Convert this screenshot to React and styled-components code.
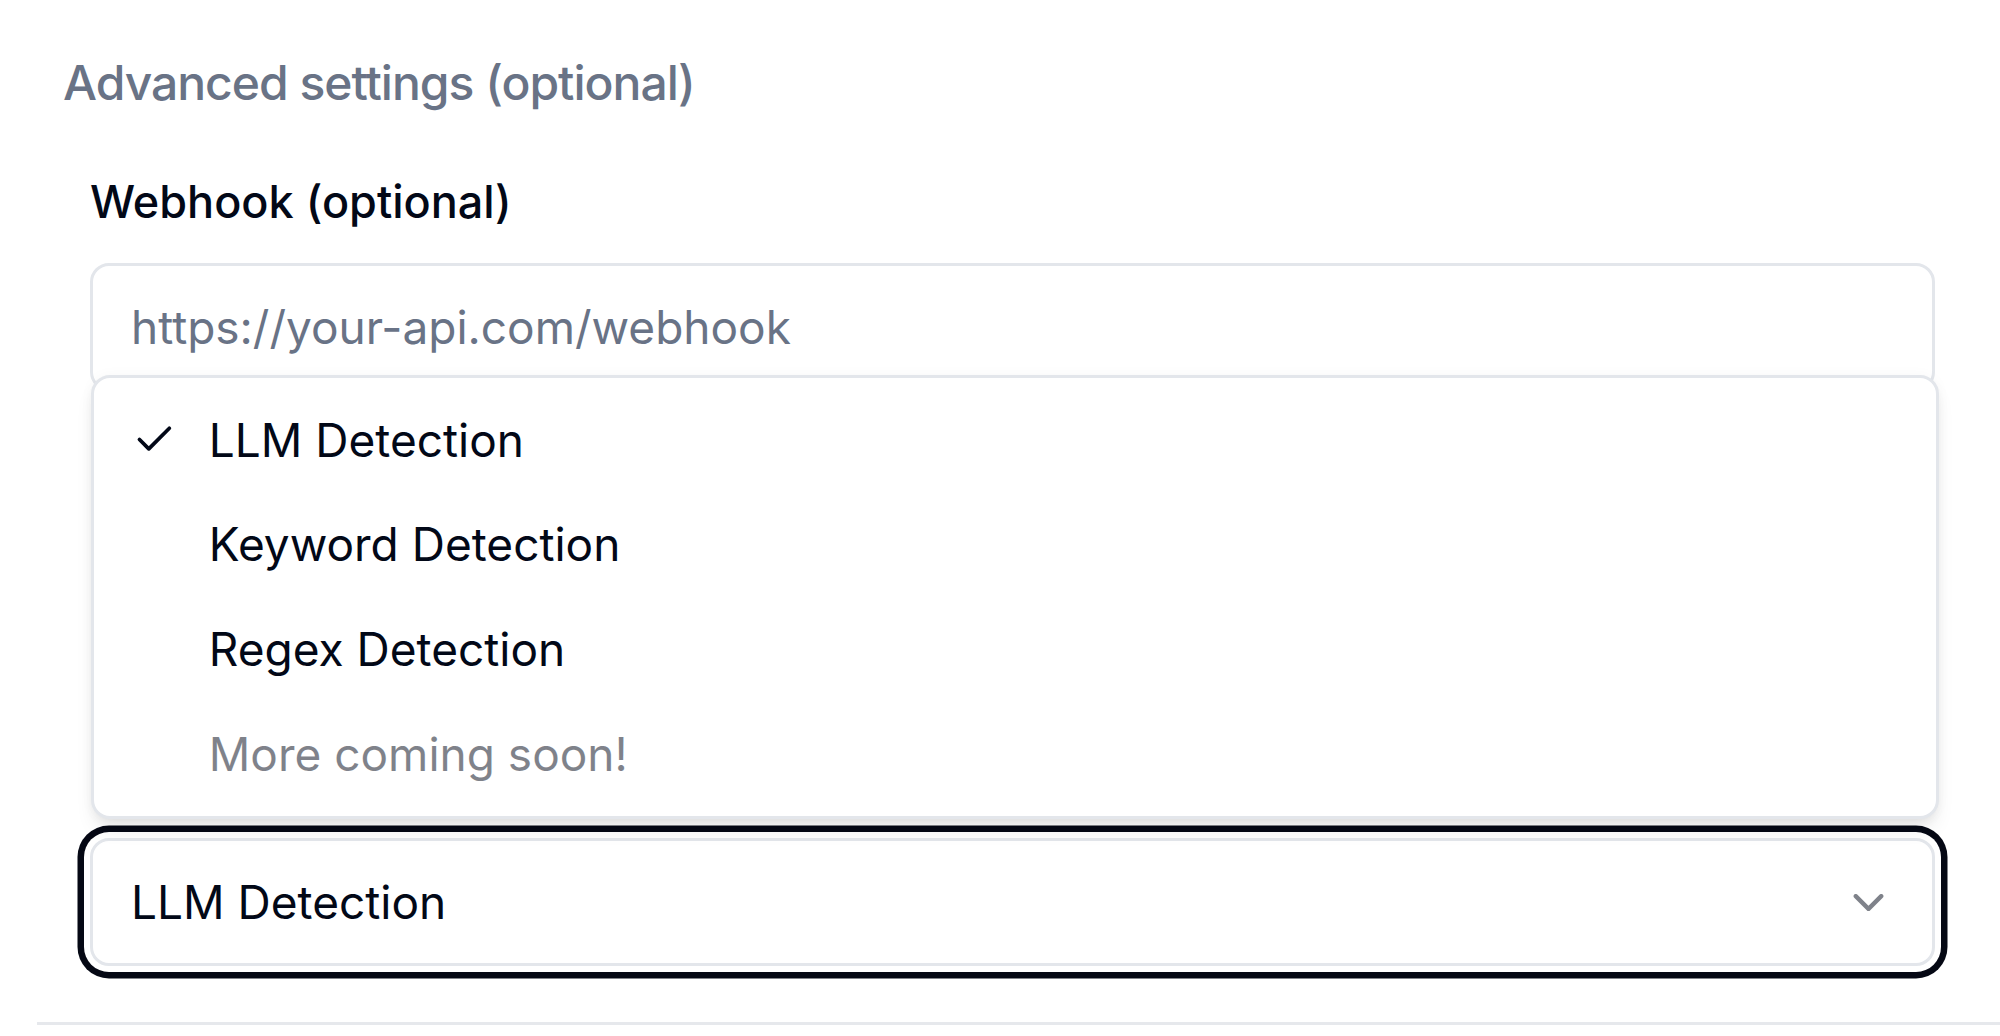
import React from "react";
import styled, { createGlobalStyle } from "styled-components";

const Global = createGlobalStyle`
  html, body { margin: 0; padding: 0; background: #ffffff; }
  body {
    font-family: Inter, "Noto Sans", "Liberation Sans", sans-serif;
    color: #020817;
    overflow: hidden;
    -webkit-font-smoothing: antialiased;
  }
  * { box-sizing: border-box; }
`;

const Section = styled.section`
  margin-left: 37px;
  border-bottom: 3px solid #e6e8ec;
  padding-bottom: 56px;
`;

const Header = styled.h3`
  margin: 0;
  padding: 59px 0 0 26px;
  font-size: 48px;
  line-height: 48px;
  letter-spacing: -1px;
  font-weight: 500;
  color: #697386;
`;

const Content = styled.div`
  margin-top: 72px;
  padding: 0 65px 0 53px;
  display: flex;
  flex-direction: column;
`;

const Field = styled.div`
  display: flex;
  flex-direction: column;
  gap: ${(p) => p.$gap || 39}px;
  margin-top: ${(p) => p.$top || 0}px;
`;

const Label = styled.label`
  font-size: 45px;
  line-height: 45px;
  font-weight: 500;
  color: #020817;
`;

const Input = styled.input`
  height: 128px;
  width: 100%;
  border: 3.2px solid #e3e6eb;
  border-radius: 19px;
  padding: 0 38px;
  font-family: inherit;
  font-size: 46px;
  color: #020817;
  background: #fff;
  outline: none;
  &::placeholder { color: #697386; }
`;

const TriggerWrap = styled.div`
  position: relative;
`;

const Trigger = styled.button`
  width: 100%;
  height: 128px;
  display: flex;
  align-items: center;
  justify-content: space-between;
  padding: 0 38px;
  border: 3.2px solid #e3e6eb;
  border-radius: 19px;
  background: #fff;
  font-family: inherit;
  font-size: 46px;
  color: #020817;
  box-shadow: 0 0 0 6px #ffffff, 0 0 0 12.5px #050814;
  cursor: pointer;
  svg { opacity: 0.5; flex-shrink: 0; }
`;

const Menu = styled.div`
  position: absolute;
  left: 1px;
  right: -4px;
  bottom: calc(100% + 19px);
  z-index: 10;
  background: #fff;
  border: 3.2px solid #e3e6eb;
  border-radius: 19px;
  padding: 9.8px;
  box-shadow: 0 12.8px 19px -3px rgba(0, 0, 0, 0.08), 0 6.4px 12.8px -6.4px rgba(0, 0, 0, 0.08), 0 0 14px rgba(0,0,0,0.03);
`;

const Item = styled.div`
  position: relative;
  height: 104.7px;
  display: flex;
  align-items: center;
  padding-left: 105px;
  font-size: 46px;
  color: #020817;
  opacity: ${(p) => (p.$disabled ? 0.5 : 1)};
`;

const CheckSlot = styled.span`
  position: absolute;
  left: 28px;
  top: 0;
  bottom: 0;
  width: 44.8px;
  display: flex;
  align-items: center;
  justify-content: center;
`;

const CheckIcon = () => (
  <svg width="51" height="51" viewBox="0 0 24 24" fill="none" stroke="#020817" strokeWidth="2" strokeLinecap="round" strokeLinejoin="round">
    <path d="M20 6 9 17l-5-5" />
  </svg>
);

const ChevronIcon = () => (
  <svg width="51" height="51" viewBox="0 0 24 24" fill="none" stroke="#020817" strokeWidth="2" strokeLinecap="round" strokeLinejoin="round">
    <path d="m6 9 6 6 6-6" />
  </svg>
);

const options = [
  { label: "LLM Detection", selected: true },
  { label: "Keyword Detection" },
  { label: "Regex Detection" },
  { label: "More coming soon!", disabled: true },
];

export default function App() {
  return (
    <>
      <Global />
      <Section>
        <Header>Advanced settings (optional)</Header>
        <Content>
          <Field>
            <Label>Webhook (optional)</Label>
            <Input placeholder="https://your-api.com/webhook" />
          </Field>
          <Field $top={447}>
            <TriggerWrap>
              <Menu role="listbox">
                {options.map((o) => (
                  <Item key={o.label} $disabled={o.disabled}>
                    {o.selected && (
                      <CheckSlot>
                        <CheckIcon />
                      </CheckSlot>
                    )}
                    {o.label}
                  </Item>
                ))}
              </Menu>
              <Trigger type="button">
                <span>LLM Detection</span>
                <ChevronIcon />
              </Trigger>
            </TriggerWrap>
          </Field>
        </Content>
      </Section>
    </>
  );
}
